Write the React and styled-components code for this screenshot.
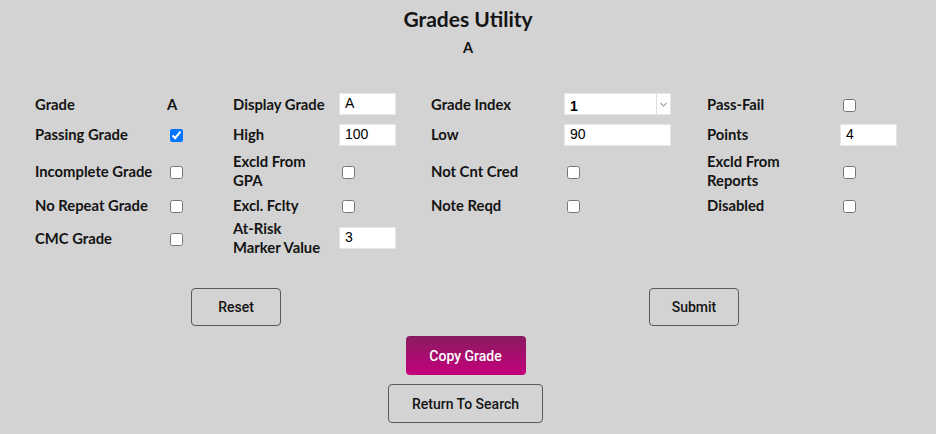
import React, { useState } from "react";
import styled, { createGlobalStyle } from "styled-components";

const GlobalStyle = createGlobalStyle`
  body {
    margin: 0;
    background: #d3d3d3;
    font-family: Lato, "Noto Sans", sans-serif;
    color: #141414;
  }
`;

const Page = styled.div`
  width: 936px;
  height: 434px;
  display: flex;
  flex-direction: column;
  align-items: center;
`;

const Title = styled.h1`
  margin: 6px 0 0;
  font-size: 21px;
  font-weight: 700;
  line-height: 25px;
`;

const SubTitle = styled.h2`
  margin: 8px 0 0;
  font-size: 14.5px;
  font-weight: 700;
  line-height: 18px;
`;

const Form = styled.div`
  align-self: flex-start;
  margin: 32px 0 0 35px;
  display: grid;
  grid-template-columns: 132px 66px 106px 92px 133px 143px 133px 60px;
  grid-template-rows: 30px 31px 42px 26px 40px;
  align-items: center;
`;

const Label = styled.div`
  font-size: 14.8px;
  font-weight: 700;
  line-height: 19px;
  padding-right: 4px;
  white-space: nowrap;
`;

const Value = styled.div`
  font-size: 14.8px;
  font-weight: 700;
`;

const TextInput = styled.input`
  box-sizing: border-box;
  width: ${(p) => p.$w || 57}px;
  height: 22px;
  border: 1px solid #e6e6e6;
  background: #fff;
  padding: 0 5px 2px;
  font-family: "Liberation Sans", Arial, sans-serif;
  font-size: 14px;
  color: #000;
  outline: none;
`;

const Check = styled.input.attrs({ type: "checkbox" })`
  width: 13px;
  height: 13px;
  margin: 2px 0 0 3px;
`;

const SelectBox = styled.div`
  display: flex;
  width: 107px;
  height: 22px;
  background: #fff;
  border: 1px solid #e6e6e6;
  box-sizing: border-box;
`;

const Select = styled.select`
  flex: 1;
  appearance: none;
  border: none;
  background: transparent;
  padding: 3px 0 0 5px;
  font-family: "Liberation Sans", Arial, sans-serif;
  font-size: 14px;
  font-weight: 700;
  color: #000;
  outline: none;
`;

const Arrow = styled.div`
  width: 13px;
  border-left: 1px solid #dcdcdc;
  display: flex;
  align-items: center;
  justify-content: center;
`;

const ButtonRow = styled.div`
  align-self: stretch;
  display: flex;
  justify-content: space-between;
  padding: 30px 197px 0 191px;
`;

const Button = styled.button`
  box-sizing: border-box;
  width: ${(p) => p.$w}px;
  height: ${(p) => p.$h || 38}px;
  border: 1px solid #5a5a5a;
  border-radius: 4px;
  background: transparent;
  font-family: Roboto, "Liberation Sans", sans-serif;
  font-weight: 500;
  font-size: 14px;
  color: #141414;
  cursor: pointer;
`;

const CopyButton = styled(Button)`
  margin: 10px 5px 0 0;
  border: none;
  background: linear-gradient(#8a1b60, #c4007c);
  color: #fff;
`;

const ReturnButton = styled(Button)`
  margin: 9px 5px 0 0;
`;

function App() {
  const [passing, setPassing] = useState(true);

  return (
    <>
      <GlobalStyle />
      <Page>
        <Title>Grades Utility</Title>
        <SubTitle>A</SubTitle>
        <Form>
          <Label>Grade</Label>
          <Value>A</Value>
          <Label>Display Grade</Label>
          <TextInput defaultValue="A" />
          <Label>Grade Index</Label>
          <SelectBox>
            <Select defaultValue="1">
              <option value="1">1</option>
            </Select>
            <Arrow>
              <svg width="7" height="5" viewBox="0 0 7 5">
                <path d="M0.5 1 L3.5 4 L6.5 1" fill="none" stroke="#a8a8a8" strokeWidth="1.2" />
              </svg>
            </Arrow>
          </SelectBox>
          <Label>Pass-Fail</Label>
          <Check />

          <Label>Passing Grade</Label>
          <Check checked={passing} onChange={(e) => setPassing(e.target.checked)} />
          <Label>High</Label>
          <TextInput defaultValue="100" />
          <Label>Low</Label>
          <TextInput $w={107} defaultValue="90" />
          <Label>Points</Label>
          <TextInput defaultValue="4" />

          <Label>Incomplete Grade</Label>
          <Check />
          <Label>
            Excld From
            <br />
            GPA
          </Label>
          <Check />
          <Label>Not Cnt Cred</Label>
          <Check />
          <Label>
            Excld From
            <br />
            Reports
          </Label>
          <Check />

          <Label>No Repeat Grade</Label>
          <Check />
          <Label>Excl. Fclty</Label>
          <Check />
          <Label>Note Reqd</Label>
          <Check />
          <Label>Disabled</Label>
          <Check />

          <Label>CMC Grade</Label>
          <Check />
          <Label>
            At-Risk
            <br />
            Marker Value
          </Label>
          <TextInput defaultValue="3" />
        </Form>
        <ButtonRow>
          <Button $w={90}>Reset</Button>
          <Button $w={90}>Submit</Button>
        </ButtonRow>
        <CopyButton $w={120} $h={39}>Copy Grade</CopyButton>
        <ReturnButton $w={155} $h={39}>Return To Search</ReturnButton>
      </Page>
    </>
  );
}

export default App;
